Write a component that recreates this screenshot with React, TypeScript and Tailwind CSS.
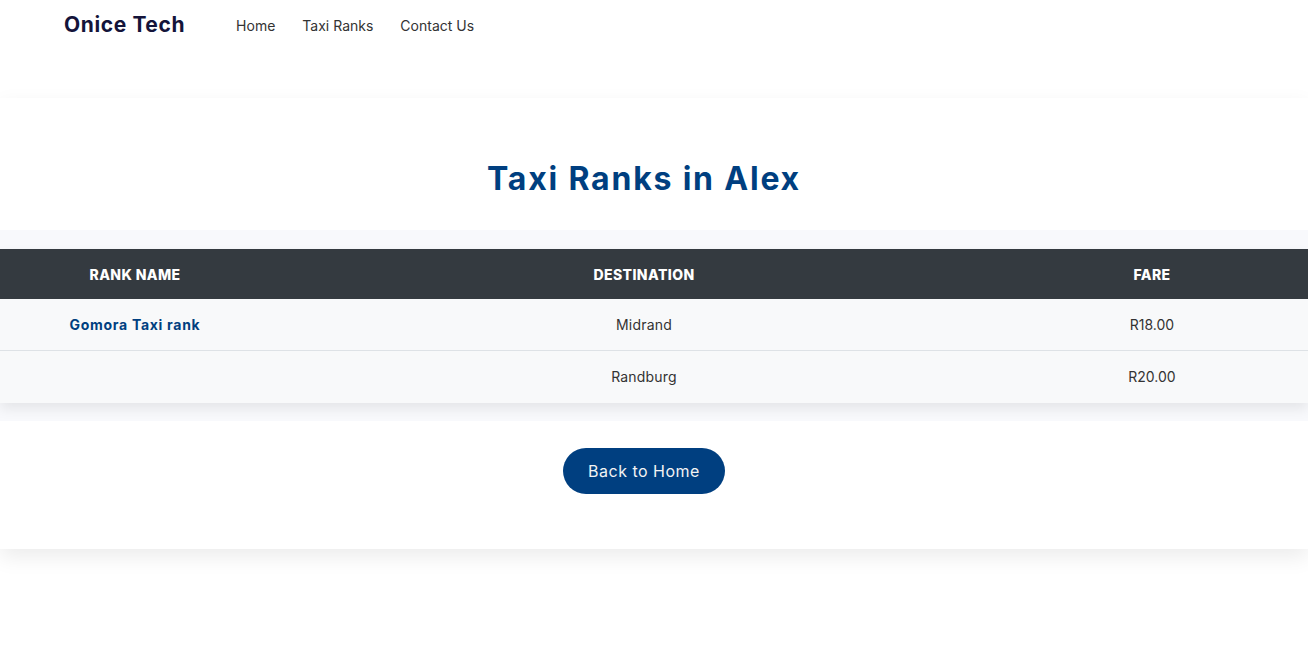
import React from "react";

const font = { fontFamily: "Inter, 'Noto Sans', sans-serif" };

export default function App() {
  const rows = [
    { name: "Gomora Taxi rank", dest: "Midrand", fare: "R18.00" },
    { name: "", dest: "Randburg", fare: "R20.00" },
  ];
  return (
    <div className="min-h-[672px] bg-white" style={font}>
      <header className="h-[50px] flex items-center pl-[64px]">
        <div className="text-[21px] font-bold text-[#14143a] tracking-[0.6px]">Onice Tech</div>
        <nav className="flex gap-[27px] ml-[51px] text-[14px] text-[#333]">
          <a>Home</a>
          <a>Taxi Ranks</a>
          <a>Contact Us</a>
        </nav>
      </header>
      <main className="mt-[48px] bg-white shadow-[0_8px_20px_rgba(0,0,0,0.08)] pb-[55px]">
        <div className="h-[132px] flex items-center justify-center pt-[30px] pr-[20px]">
          <h1 className="text-[32px] font-bold text-[#003f80] tracking-[1.8px]">Taxi Ranks in Alex</h1>
        </div>
        <section className="bg-[#f8f9fc] pt-[19px] pb-[18px]">
          <div className="shadow-[0_6px_12px_rgba(0,0,0,0.08)]">
            <div className="grid grid-cols-[270px_748px_290px] h-[50px] bg-[#343a40] text-white text-[14px] font-extrabold items-center text-center tracking-[0.4px]">
              <div>RANK NAME</div>
              <div>DESTINATION</div>
              <div className="pr-[22px]">FARE</div>
            </div>
            {rows.map((r, i) => (
              <div
                key={i}
                className={`grid grid-cols-[270px_748px_290px] h-[52px] bg-[#f8f9fa] items-center text-center text-[14px] text-[#333] ${i === 0 ? "border-b border-[#dee2e6]" : ""}`}
              >
                <div className="font-bold text-[#003f80] tracking-[0.7px]">{r.name}</div>
                <div className="tracking-[0.2px] pb-[1px]">{r.dest}</div>
                <div className="pr-[22px] pb-[1px]">{r.fare}</div>
              </div>
            ))}
          </div>
        </section>
        <div className="flex justify-center pt-[27px] pr-[20px]">
          <button className="w-[162px] h-[46px] rounded-full bg-[#003f80] text-[#f3f3f3] text-[16px] tracking-[0.5px]">
            Back to Home
          </button>
        </div>
      </main>
    </div>
  );
}
